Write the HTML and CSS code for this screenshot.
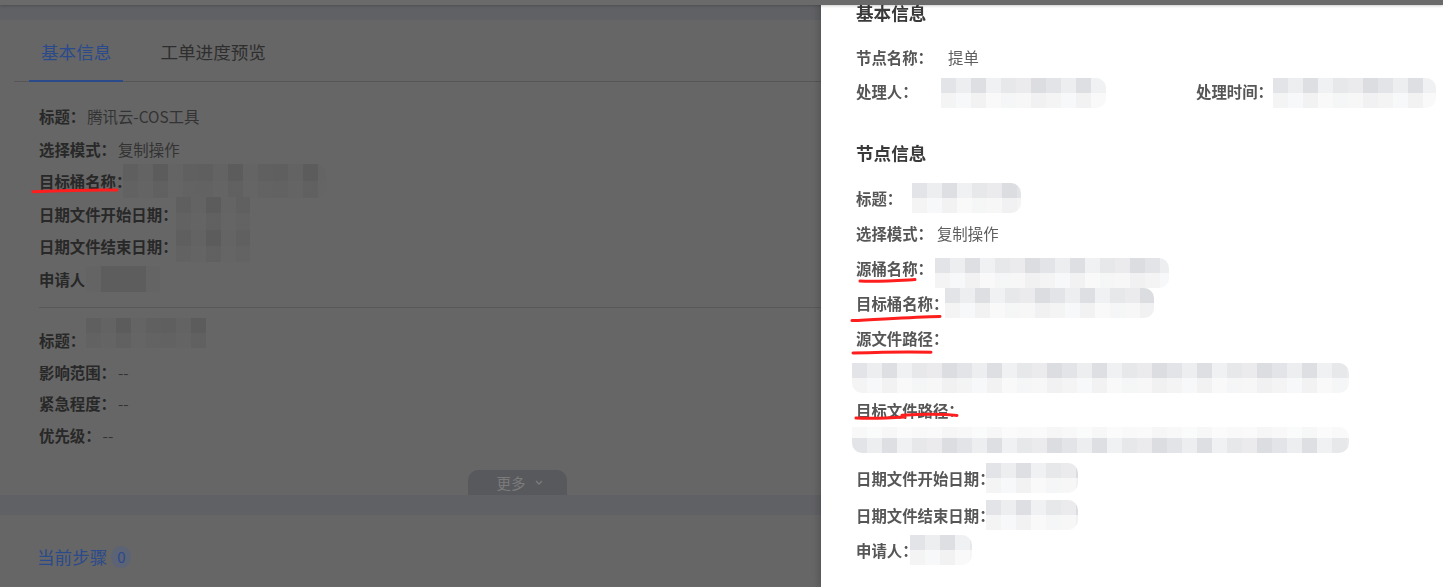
FILE: index.html
```html
<!DOCTYPE html>
<html lang="zh-CN">
<head>
<meta charset="utf-8">
<title>工单详情</title>
<link rel="stylesheet" href="styles.css">
</head>
<body>
<div class="page">
  <header class="topbar"></header>
  <main class="content">
    <section class="card card-detail">
      <nav class="tabs">
        <span class="tab active">基本信息</span>
        <span class="tab">工单进度预览</span>
      </nav>
      <div class="fields">
        <div class="field"><span class="f-label">标题：</span><span class="f-value">腾讯云-COS工具</span></div>
        <div class="field"><span class="f-label">选择模式：</span><span class="f-value">复制操作</span></div>
        <div class="field">
          <span class="f-label marked">目标桶名称：<svg class="scribble sc-left" viewBox="0 0 90 8" width="90" height="8"><path d="M2 5.8 C 28 4.6, 58 3.6, 86 4"/></svg></span>
          <span class="redact-dim rd-bucket"></span>
        </div>
        <div class="field"><span class="f-label">日期文件开始日期：</span><span class="redact-dim rd-date"></span></div>
        <div class="field"><span class="f-label">日期文件结束日期：</span><span class="redact-dim rd-date rd-date2"></span></div>
        <div class="field"><span class="f-label">申请人：</span><span class="redact-dim rd-user"></span></div>
      </div>
      <div class="divider"></div>
      <div class="fields fields-2">
        <div class="field"><span class="f-label">标题：</span><span class="redact-dim rd-title"></span></div>
        <div class="field"><span class="f-label">影响范围：</span><span class="f-value">--</span></div>
        <div class="field"><span class="f-label">紧急程度：</span><span class="f-value">--</span></div>
        <div class="field"><span class="f-label">优先级：</span><span class="f-value">--</span></div>
      </div>
      <button class="more-btn" type="button">更多<svg class="chev" viewBox="0 0 8 5" width="8" height="5"><path d="M1 1 L4 4 L7 1"/></svg></button>
    </section>
    <section class="card card-steps">
      <h2 class="steps-title">当前步骤<span class="badge">0</span></h2>
    </section>
  </main>
</div>

<aside class="drawer">
  <h3 class="d-title">基本信息</h3>
  <div class="d-info">
    <div class="d-row"><span class="d-label d-fixed">节点名称：</span><span class="d-value">提单</span></div>
    <div class="d-grid">
      <div class="d-row"><span class="d-label d-fixed">处理人：</span><span class="redact r-handler"></span></div>
      <div class="d-row"><span class="d-label">处理时间：</span><span class="redact r-time"></span></div>
    </div>
  </div>

  <h3 class="d-title d-title-2">节点信息</h3>
  <div class="d-fields">
    <div class="d-row"><span class="d-label">标题：</span><span class="redact r-title"></span></div>
    <div class="d-row"><span class="d-label">选择模式：</span><span class="d-value d-value-gap">复制操作</span></div>
    <div class="d-row">
      <span class="d-label marked">源桶名称：<svg class="scribble sc-src" viewBox="0 0 62 8" width="62" height="8"><path d="M3 5 C 20 6, 40 4.6, 58 3.6"/></svg></span>
      <span class="redact r-src"></span>
    </div>
    <div class="d-row">
      <span class="d-label marked">目标桶名称：<svg class="scribble sc-dst" viewBox="0 0 94 10" width="94" height="10"><path d="M2 7.6 C 30 6.4, 60 4, 90 3.4"/></svg></span>
      <span class="redact r-dst"></span>
    </div>
    <div class="d-row d-row-path">
      <span class="d-label marked">源文件路径：<svg class="scribble sc-srcpath" viewBox="0 0 84 8" width="84" height="8"><path d="M2 5 C 25 4.2, 55 3.4, 80 4.2"/></svg></span>
    </div>
    <div class="redact r-path r-path-src"></div>
    <div class="d-row d-row-path">
      <span class="d-label marked">目标文件路径：<svg class="scribble sc-dstpath" viewBox="0 0 108 10" width="108" height="10"><path d="M3 7 C 20 7.6, 36 7, 52 6 M49 4.2 C 70 3, 90 3, 104 4.4"/></svg></span>
    </div>
    <div class="redact r-path r-path-dst"></div>
    <div class="d-row d-row-date"><span class="d-label">日期文件开始日期：</span><span class="redact r-date"></span></div>
    <div class="d-row"><span class="d-label">日期文件结束日期：</span><span class="redact r-date"></span></div>
    <div class="d-row"><span class="d-label">申请人：</span><span class="redact r-user"></span></div>
  </div>
</aside>
</body>
</html>
```
FILE: styles.css
```css
* { box-sizing: border-box; }

html, body {
  margin: 0;
  padding: 0;
}

body {
  width: 1443px;
  height: 587px;
  overflow: hidden;
  background: #606164;
  font-family: "Noto Sans CJK SC", "Noto Sans", sans-serif;
}

/* ---------- dimmed page behind the drawer ---------- */
.page {
  height: 587px;
  display: flex;
  flex-direction: column;
}

.topbar {
  height: 5px;
  background: #6a6a6a;
  box-shadow: 0 1px 3px rgba(0, 0, 0, 0.2);
  position: relative;
  z-index: 1;
}

.content {
  flex: 1;
  padding-top: 15px;
  background: #606164;
}

.card {
  background: #666666;
  width: 1035px;
}

.card-detail {
  height: 475px;
  display: flex;
  flex-direction: column;
}

.tabs {
  display: flex;
  gap: 25px;
  margin-left: 14px;
  padding-left: 15px;
  border-bottom: 1px solid #565656;
}

.tab {
  padding: 20px 12px 16px;
  font-size: 17.6px;
  line-height: 24px;
  color: #2e2e2e;
  border-bottom: 2px solid transparent;
  margin-bottom: -1px;
}

.tab.active {
  color: #2b4a8b;
  border-bottom-color: #2b4a8b;
}

.fields {
  padding: 23px 0 0 39px;
}

.field {
  display: flex;
  align-items: center;
  height: 22px;
  margin-bottom: 10.5px;
  font-size: 15.4px;
}

.fields-2 {
  padding-top: 21px;
}

.fields-2 .field {
  margin-bottom: 9.5px;
}

.f-label {
  font-weight: 700;
  color: #282828;
  white-space: nowrap;
}

.f-value {
  color: #333333;
  margin-left: 2px;
}

.marked {
  position: relative;
}

.divider {
  margin: 7px 0 0 39px;
  border-top: 1px solid #585858;
}

.more-btn {
  margin-top: auto;
  align-self: center;
  width: 99px;
  height: 25px;
  border: 0;
  border-radius: 10px 10px 0 0;
  background: #58595d;
  color: #7b7b7b;
  font-family: inherit;
  font-size: 14.5px;
  line-height: 25px;
  padding: 0 0 0 4px;
  display: flex;
  align-items: center;
  justify-content: center;
  gap: 9px;
}

.chev {
  fill: none;
  stroke: #7b7b7b;
  stroke-width: 1.3;
}

.card-steps {
  margin-top: 20px;
  height: 72px;
  padding: 30px 0 0 37px;
}

.steps-title {
  margin: 0;
  display: flex;
  align-items: center;
  gap: 4px;
  font-size: 17.6px;
  line-height: 24px;
  font-weight: 400;
  color: #2b4a8b;
}

.badge {
  width: 20px;
  height: 22px;
  border-radius: 50%;
  background: #5b6374;
  color: #2b4a8b;
  font-size: 15px;
  line-height: 22px;
  text-align: center;
}

/* redacted (pixelated) blocks on the dim page */
.redact-dim {
  display: block;
  flex: none;
  background-image:
    linear-gradient(180deg, rgba(102, 102, 102, 0) 50%, rgba(102, 102, 102, 0.45) 50%),
    repeating-linear-gradient(90deg, #5f5f5f 0 15px, #636363 15px 30px, #5c5c5c 30px 45px, #646464 45px 60px, #606060 60px 75px);
}

.rd-bucket {
  width: 203px;
  height: 34px;
  margin-left: -8px;
  border-radius: 0 10px 10px 0;
}

.rd-date {
  width: 74px;
  height: 33px;
  margin-left: -2px;
}

.rd-date2 {
  height: 32px;
}

.rd-user {
  width: 74px;
  height: 26px;
  margin-left: -15px;
  background-image:
    linear-gradient(90deg, #646464 0 15px, #5d5d5d 15px 60px, #646464 60px 74px);
}

.rd-title {
  width: 120px;
  height: 30px;
  margin-left: 1px;
  margin-top: -14px;
}

/* ---------- drawer ---------- */
.drawer {
  position: fixed;
  top: 0;
  right: 0;
  width: 622px;
  height: 587px;
  background: #ffffff;
  box-shadow: -3px 0 6px rgba(0, 0, 0, 0.15);
  padding: 1px 0 0 35px;
  overflow: hidden;
  font-size: 15.4px;
}

.d-title {
  margin: 0;
  font-size: 17.6px;
  line-height: 24px;
  font-weight: 700;
  color: #3a3a3a;
}

.d-title-2 {
  margin-top: 39px;
}

.d-info {
  margin-top: 21px;
}

.d-grid {
  display: grid;
  grid-template-columns: 340px 1fr;
  margin-top: 12px;
}

.d-row {
  display: flex;
  align-items: center;
  height: 22px;
}

.d-fields {
  margin-top: 22px;
}

.d-fields .d-row {
  margin-bottom: 13px;
}

.d-fields .d-row-path {
  margin-bottom: 0;
}

.d-fields .d-row-date {
  margin-bottom: 15px;
}

.d-label {
  font-weight: 700;
  color: #565656;
  white-space: nowrap;
}

.d-fixed {
  width: 92px;
}

.d-value {
  color: #5e5e5e;
}

.d-value-gap {
  margin-left: 4px;
}

.redact {
  display: block;
  flex: none;
  height: 30px;
  border-radius: 0 10px 10px 0;
  background-image:
    linear-gradient(180deg, rgba(255, 255, 255, 0) 50%, rgba(255, 255, 255, 0.6) 50%),
    repeating-linear-gradient(90deg, #e3e4e7 0 15px, #eceef0 15px 30px, #dedfe2 30px 45px, #f0f1f3 45px 60px, #e7e8ea 60px 75px, #ebebed 75px 90px, #dcdde0 90px 105px);
}

.r-handler { width: 165px; margin-left: -7px; margin-top: 4px; }
.r-time { width: 163px; margin-top: 4px; }
.r-title { width: 109px; margin-left: 10px; }
.r-src { width: 234px; margin-left: 2px; margin-top: 9px; }
.r-dst { width: 209px; margin-left: -3px; }
.r-date { width: 92px; margin-left: -9px; }
.r-user { width: 62px; margin-left: -8px; }

.r-path {
  width: 497px;
  margin-left: -4px;
  border-radius: 0 10px 10px 10px;
}

.r-path-src {
  margin-top: 14px;
  margin-bottom: 6px;
}

.r-path-dst {
  height: 26px;
  margin-top: 6px;
  margin-bottom: 14px;
  background-image:
    linear-gradient(180deg, rgba(255, 255, 255, 0.75) 42%, rgba(255, 255, 255, 0) 42%),
    repeating-linear-gradient(90deg, #e3e4e7 0 15px, #eceef0 15px 30px, #dedfe2 30px 45px, #f0f1f3 45px 60px, #e7e8ea 60px 75px, #ebebed 75px 90px, #dcdde0 90px 105px);
}

/* hand-drawn red underline annotations */
.scribble {
  position: absolute;
  fill: none;
  stroke: #ff1e1e;
  stroke-width: 3;
  stroke-linecap: round;
  stroke-linejoin: round;
  pointer-events: none;
}

.sc-left { left: -8px; top: 16px; }
.sc-src { left: 1px; top: 19px; }
.sc-dst { left: -6px; top: 21px; }
.sc-srcpath { left: -5px; top: 21px; }
.sc-dstpath { left: -3px; top: 12px; }
```
